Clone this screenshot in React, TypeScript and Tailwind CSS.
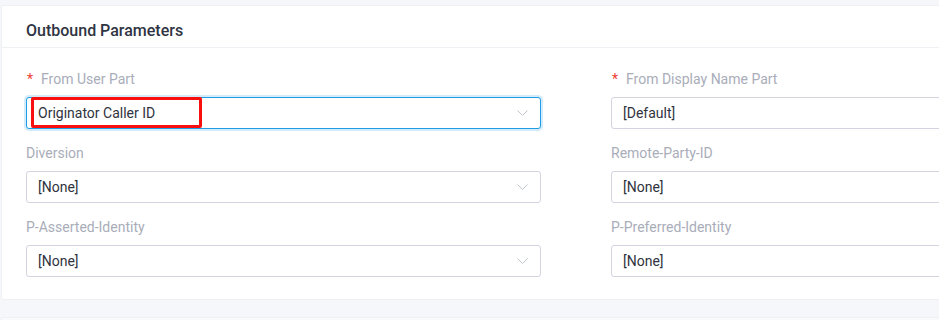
const rows = [
  [
    { label: "From User Part", value: "Originator Caller ID", required: true, focused: true, marked: true },
    { label: "From Display Name Part", value: "[Default]", required: true },
  ],
  [
    { label: "Diversion", value: "[None]" },
    { label: "Remote-Party-ID", value: "[None]" },
  ],
  [
    { label: "P-Asserted-Identity", value: "[None]" },
    { label: "P-Preferred-Identity", value: "[None]" },
  ],
];

type Field = { label: string; value: string; required?: boolean; focused?: boolean; marked?: boolean };

function Chevron() {
  return (
    <svg width="11" height="7" viewBox="0 0 11 7" fill="none" className="shrink-0">
      <polyline points="0.5,0.5 5.5,5.5 10.5,0.5" stroke="#c0c4cc" strokeWidth="1" />
    </svg>
  );
}

function SelectField({ field }: { field: Field }) {
  return (
    <div className="w-[515px]">
      <div className="flex h-5 items-center text-sm leading-5 text-[#a9adb9]">
        {field.required && <span className="ml-px mr-[8px] text-[#f04134]">*</span>}
        <span>{field.label}</span>
      </div>
      <div
        className={
          field.focused
            ? "relative mt-2 flex h-8 items-center justify-between rounded-[3px] border border-[#1e9de6] bg-white pl-[11px] pr-3 shadow-[0_0_0_2px_#d3ebfb]"
            : "relative mt-2 flex h-8 items-center justify-between rounded-[3px] border border-[#d4d3e0] bg-white pl-[11px] pr-3"
        }
      >
        <span className="text-sm text-[#30333d]">{field.value}</span>
        <Chevron />
        {field.marked && (
          <div className="absolute left-[4px] top-[-1px] h-[31px] w-[171px] rounded-[2px] border-[3px] border-[#fa0f0f]" />
        )}
      </div>
    </div>
  );
}

export default function App() {
  return (
    <div className="h-[320px] w-[939px] overflow-hidden bg-[#f6f7fa] pl-[1px] pt-[5px] font-['Roboto',sans-serif]">
      <div className="w-[1150px] rounded-[3px] border border-[#eef0f4] bg-white">
        <div className="border-b border-[#eef0f4] px-6 pb-[5px] pt-[14px]">
          <h2 className="text-base font-medium leading-[22px] text-[#2f3443]">Outbound Parameters</h2>
        </div>
        <div className="flex flex-col gap-[14px] px-6 pb-[22px] pt-[21px]">
          {rows.map((row, i) => (
            <div key={i} className="flex gap-[70px]">
              {row.map((f) => (
                <SelectField key={f.label} field={f} />
              ))}
            </div>
          ))}
        </div>
      </div>
      <div className="mt-[17px] h-10 w-[1150px] border border-[#eef0f4] bg-[#f9fafc]" />
    </div>
  );
}
